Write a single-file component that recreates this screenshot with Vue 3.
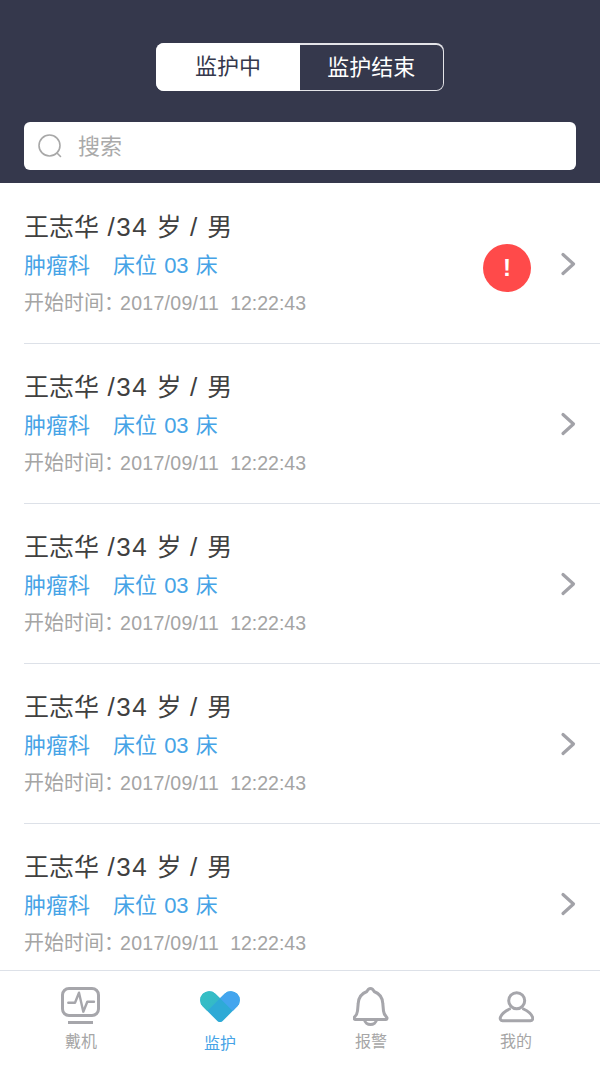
<script setup>
const rows = [
  { alert: true },
  { alert: false },
  { alert: false },
  { alert: false },
  { alert: false },
]
</script>

<template>
  <div class="page">
    <header class="head">
      <div class="seg">
        <div class="seg-item on">监护中</div>
        <div class="seg-item off">监护结束</div>
      </div>
      <div class="search">
        <svg class="search-icon" width="26" height="26" viewBox="0 0 26 26" fill="none" stroke="#a8a8a8" stroke-width="1.6" stroke-linecap="round">
          <circle cx="12.500" cy="12.500" r="10.500" />
          <path d="M20 20l3.500 3.500" />
        </svg>
        <span class="placeholder">搜索</span>
      </div>
    </header>
    <main class="list">
      <div v-for="(r, i) in rows" :key="i" class="row">
        <div class="info">
          <div class="name">王志华 <span class="num">/34</span> 岁 <span class="num">/</span> 男</div>
          <div class="dept"><span>肿瘤科</span><span>床位 03 床</span></div>
          <div class="time"><span class="label">开始时间：</span><span class="stamp">2017/09/11</span><span class="stamp clock">12:22:43</span></div>
        </div>
        <div v-if="r.alert" class="badge">!</div>
        <svg class="chev" width="16" height="24" viewBox="0 0 16 24" fill="none" stroke="#a2a2a8" stroke-width="3.200" stroke-linecap="round" stroke-linejoin="round">
          <path d="M3 2.500l10.500 9.500L3 21.500" />
        </svg>
      </div>
    </main>
    <nav class="tabs">
      <div class="tab">
        <div class="tab-icon">
          <svg width="42" height="40" viewBox="0 0 42 40" fill="none" stroke="#a6a6ab" stroke-width="3" stroke-linecap="round" stroke-linejoin="round">
            <rect x="2.500" y="2.500" width="36" height="27" rx="6.500" />
            <path stroke-width="2.400" d="M8.300 16.700H15L19 6.700l4.300 19 4-10H34" />
            <path d="M8 36.500h25" stroke-linecap="butt" />
          </svg>
        </div>
        <span>戴机</span>
      </div>
      <div class="tab active">
        <div class="tab-icon">
          <svg width="40" height="31" viewBox="0 0 40 31">
            <defs>
              <linearGradient id="teal" gradientUnits="userSpaceOnUse" x1="3" y1="3" x2="16" y2="16">
                <stop offset="0" stop-color="#36bfc4" />
                <stop offset="1" stop-color="#34b8c8" />
              </linearGradient>
            </defs>
            <path fill="#2eaad6" d="M20 7.280L24.640 2.640A9 9 0 0 1 37.360 15.360L22.930 29.780A4.150 4.150 0 0 1 17.070 29.780L2.640 15.360A9 9 0 0 1 15.360 2.640Z" />
            <path fill="url(#teal)" d="M20 7.280L7.280 20L2.640 15.360A9 9 0 0 1 15.360 2.640Z" />
            <path fill="#43a5ee" d="M20 7.280L24.640 2.640A9 9 0 0 1 37.360 15.360L32.720 20Z" />
          </svg>
        </div>
        <span>监护</span>
      </div>
      <div class="tab">
        <div class="tab-icon">
          <svg width="36" height="40" viewBox="0 0 36 40" fill="none" stroke="#a6a6ab" stroke-width="3" stroke-linecap="round" stroke-linejoin="round">
            <path d="M17.500 2.500c1.600 0 2.800 1.200 3.600 3C26.500 7.500 29.500 12 29.800 17.500L30.500 25c.2 2.500 1.500 4.500 3 6 1 1 .5 2.500-1 2.500H2.500c-1.500 0-2-1.500-1-2.500 1.500-1.500 2.800-3.500 3-6l.7-7.500C5.500 12 8.500 7.500 13.900 5.500c.8-1.800 2-3 3.600-3z" />
            <path d="M11.500 34c.5 2.500 3 4.500 6 4.500s5.500-2 6-4.500" />
          </svg>
        </div>
        <span>报警</span>
      </div>
      <div class="tab">
        <div class="tab-icon">
          <svg width="36" height="40" viewBox="0 0 36 40" fill="none" stroke="#a6a6ab" stroke-width="3" stroke-linecap="round" stroke-linejoin="round">
            <circle cx="18.700" cy="14.700" r="8" />
            <path d="M11.500 23C7 25 3.800 28 2.500 31c-.8 2 .2 3.700 2 3.700h28c1.800 0 2.800-1.700 2-3.700-1.300-3-4.500-6-9-8" />
          </svg>
        </div>
        <span>我的</span>
      </div>
    </nav>
  </div>
</template>

<style>
html, body { margin: 0; background: #fff; }
</style>

<style scoped>
.page {
  width: 600px;
  height: 1067px;
  display: flex;
  flex-direction: column;
  overflow: hidden;
  background: #fff;
  font-family: "Liberation Sans", "Noto Sans CJK SC", sans-serif;
}
.head {
  height: 183px;
  flex: none;
  box-sizing: border-box;
  background: #35384c;
  padding: 43px 24px 0;
  display: flex;
  flex-direction: column;
  align-items: center;
}
.seg {
  display: flex;
  width: 288px;
  height: 48px;
  box-sizing: border-box;
  background: #e4e4e8;
  border-radius: 8px;
  overflow: hidden;
}
.seg-item {
  text-align: center;
  font-size: 22px;
  line-height: 48px;
}
.seg-item.on {
  flex: 0 0 144px;
  background: #fff;
  color: #35384c;
}
.seg-item.off {
  flex: 1;
  margin: 1.500px 1.500px 1.500px 0;
  line-height: 45px;
  background: #35384c;
  border-radius: 0 6.500px 6.500px 0;
  color: #fff;
}
.search {
  margin-top: 31px;
  width: 552px;
  height: 48px;
  flex: none;
  box-sizing: border-box;
  background: #fff;
  border-radius: 6px;
  display: flex;
  align-items: center;
  padding-left: 13px;
}
.search-icon { flex: none; }
.placeholder {
  margin-left: 15px;
  margin-top: -4px;
  font-size: 22px;
  color: #aaa;
}
.list { flex: 1; min-height: 0; padding-top: 1px; }
.row {
  height: 160px;
  margin-left: 24px;
  box-sizing: border-box;
  border-bottom: 1px solid #dde1e8;
  display: flex;
  align-items: center;
  padding-right: 24px;
}
.row:last-child { border-bottom: 0; }
.info { flex: 1; min-width: 0; margin-top: 2px; }
.name {
  font-size: 25px;
  word-spacing: 1.500px;
  line-height: 37px;
  color: #404040;
}
.num { font-size: 26px; letter-spacing: 1.500px; }
.dept {
  font-size: 22px;
  line-height: 40px;
  word-spacing: 1px;
  color: #46a3e6;
  display: flex;
  gap: 23px;
}
.time {
  font-size: 20px;
  line-height: 35px;
  color: #a4a4a4;
  display: flex;
}
.label { width: 96px; white-space: nowrap; }
.stamp { font-size: 19.500px; letter-spacing: 0.3px; }
.clock { margin-left: 11px; letter-spacing: 0; }
.badge {
  width: 48px;
  height: 48px;
  margin: 9px 29px 0 0;
  border-radius: 50%;
  background: #ff4a4a;
  color: #fff;
  font-size: 24px;
  font-weight: 700;
  line-height: 48px;
  text-align: center;
}
.chev { flex: none; }
.tabs {
  height: 97px;
  flex: none;
  box-sizing: border-box;
  border-top: 1px solid #dde1e8;
  background: #fff;
  display: grid;
  grid-template-columns: 162px 116px 186px 104px;
}
.tab {
  display: flex;
  flex-direction: column;
  align-items: center;
  padding-top: 15px;
  font-size: 16px;
  color: #a6a6a6;
}
.tab-icon {
  height: 40px;
  display: flex;
  align-items: center;
  justify-content: center;
}
.tab span { line-height: 20px; margin-top: 6px; }
.tab.active { color: #46a3e6; }
.tab.active span { margin-top: 8px; }
</style>
